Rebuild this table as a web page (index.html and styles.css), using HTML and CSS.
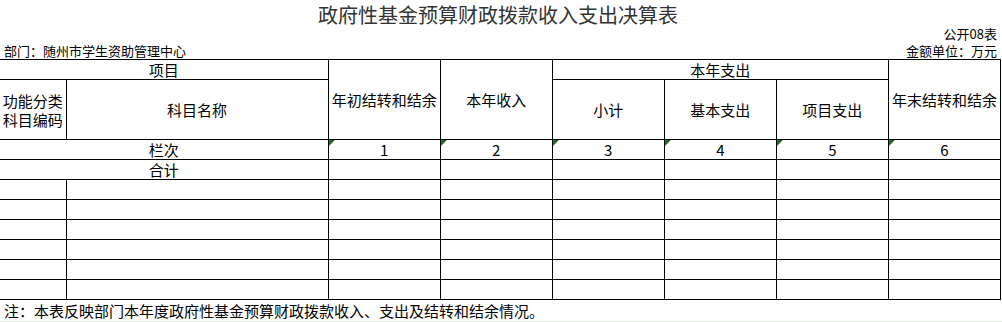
FILE: index.html
```html
<!DOCTYPE html>
<html lang="zh-CN">
<head>
<meta charset="utf-8">
<title>政府性基金预算财政拨款收入支出决算表</title>
<link rel="stylesheet" href="styles.css">
</head>
<body>
<div class="sheet">
  <h1 class="title">政府性基金预算财政拨款收入支出决算表</h1>
  <div class="meta meta-code">公开08表</div>
  <div class="meta meta-row"><span>部门：随州市学生资助管理中心</span><span>金额单位：万元</span></div>
  <table class="grid">
    <colgroup>
      <col class="c-code"><col class="c-name"><col class="c-num"><col class="c-num"><col class="c-num"><col class="c-num"><col class="c-num"><col class="c-num">
    </colgroup>
    <thead>
      <tr class="h1">
        <th colspan="2" class="first">项目</th>
        <th rowspan="2">年初结转和结余</th>
        <th rowspan="2">本年收入</th>
        <th colspan="3">本年支出</th>
        <th rowspan="2">年末结转和结余</th>
      </tr>
      <tr class="h2">
        <th class="first two-line">功能分类<br>科目编码</th>
        <th>科目名称</th>
        <th>小计</th>
        <th>基本支出</th>
        <th>项目支出</th>
      </tr>
    </thead>
    <tbody>
      <tr class="seq">
        <td colspan="2" class="first">栏次</td>
        <td class="mark">1</td><td class="mark">2</td><td class="mark">3</td><td class="mark">4</td><td class="mark">5</td><td class="mark">6</td>
      </tr>
      <tr>
        <td colspan="2" class="first">合计</td>
        <td></td><td></td><td></td><td></td><td></td><td></td>
      </tr>
      <tr><td class="first"></td><td></td><td></td><td></td><td></td><td></td><td></td><td></td></tr>
      <tr><td class="first"></td><td></td><td></td><td></td><td></td><td></td><td></td><td></td></tr>
      <tr><td class="first"></td><td></td><td></td><td></td><td></td><td></td><td></td><td></td></tr>
      <tr><td class="first"></td><td></td><td></td><td></td><td></td><td></td><td></td><td></td></tr>
      <tr><td class="first"></td><td></td><td></td><td></td><td></td><td></td><td></td><td></td></tr>
      <tr><td class="first"></td><td></td><td></td><td></td><td></td><td></td><td></td><td></td></tr>
    </tbody>
  </table>
  <div class="note">注：本表反映部门本年度政府性基金预算财政拨款收入、支出及结转和结余情况。</div>
  <div class="edge"></div>
</div>
</body>
</html>
```

FILE: styles.css
```css
* {
  box-sizing: border-box;
}

html,
body {
  margin: 0;
  padding: 0;
  background: #fff;
}

body {
  width: 1002px;
  height: 322px;
  overflow: hidden;
  font-family: "Noto Sans CJK SC", "Noto Sans", sans-serif;
  color: #000;
}

.sheet {
  display: flex;
  flex-direction: column;
  height: 322px;
}

.title {
  margin: 0;
  height: 27px;
  line-height: 29px;
  font-size: 20px;
  font-weight: normal;
  text-align: center;
  color: #333;
  padding-right: 6px;
}

.meta {
  font-size: 13px;
}

.meta-code {
  height: 14px;
  line-height: 14px;
  text-align: right;
  padding-right: 5px;
}

.meta-row {
  display: flex;
  justify-content: space-between;
  height: 18px;
  line-height: 16px;
  padding: 2px 5px 0 4px;
}

.grid {
  border-collapse: collapse;
  table-layout: fixed;
  width: 1001px;
  font-size: 15px;
}

.c-code {
  width: 66px;
}

.c-name {
  width: 262px;
}

.c-num {
  width: 112px;
}

.grid th,
.grid td {
  border: 1px solid #000;
  padding: 0;
  font-weight: normal;
  text-align: center;
  vertical-align: middle;
  line-height: 19px;
  white-space: nowrap;
}

.grid .first {
  border-left: 0;
}

.grid tr {
  height: 20px;
}

.grid tr.h2 {
  height: 60px;
}

.two-line {
  line-height: 19px;
}

.seq td {
  line-height: 19px;
}

.mark {
  position: relative;
}

.mark::before {
  content: "";
  position: absolute;
  left: 0;
  top: 0;
  border-style: solid;
  border-width: 6px 6px 0 0;
  border-color: #1f6f2c transparent transparent transparent;
}

.note {
  height: 21px;
  line-height: 21px;
  font-size: 15px;
  padding-left: 4px;
  white-space: nowrap;
}

.edge {
  flex: 1;
  background: #dcefdc;
}
```
